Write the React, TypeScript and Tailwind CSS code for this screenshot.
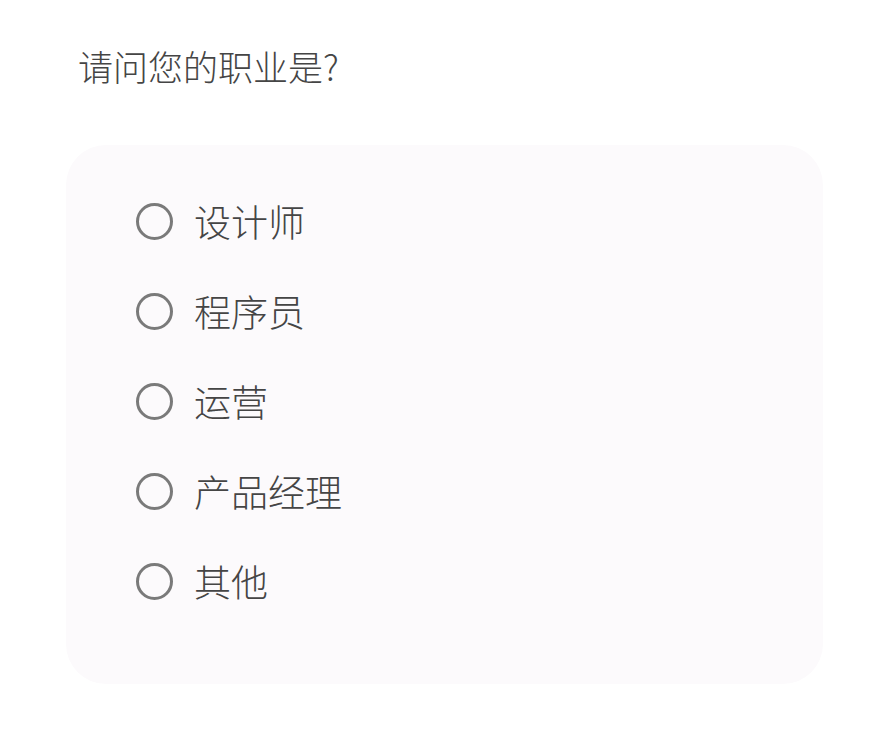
const options = ["设计师", "程序员", "运营", "产品经理", "其他"];

const App = () => {
  return (
    <div
      className="w-[886px] h-[744px] bg-white"
      style={{ fontFamily: '"Noto Sans CJK SC", "Noto Sans", sans-serif' }}
    >
      <div className="pl-[78px] pt-[41px]">
        <h1 className="text-[35px] leading-[50px] text-[#454545] font-light">
          请问您的职业是?
        </h1>
      </div>

      <div className="ml-[66px] mt-[54px] w-[757px] h-[539px] rounded-[40px] bg-[#fcfafc] pl-[70px] pt-[58px] flex flex-col gap-[54px]">
        {options.map((label) => (
          <label key={label} className="flex items-center h-[36px] cursor-pointer">
            <span className="w-[37px] h-[37px] rounded-full border-[3px] border-[#7a7a7a] shrink-0" />
            <span className="ml-[21px] text-[37px] leading-[36px] text-[#454545] font-light">
              {label}
            </span>
          </label>
        ))}
      </div>
    </div>
  );
};

export default App;
